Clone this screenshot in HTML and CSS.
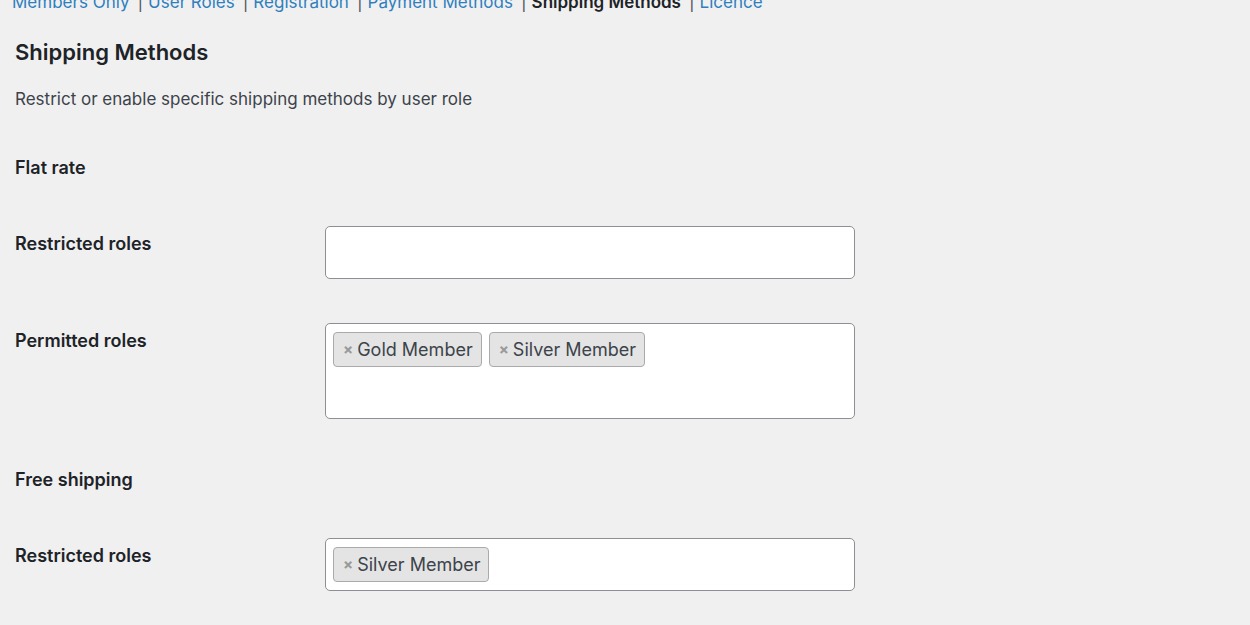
FILE: index.html
```html
<!DOCTYPE html>
<html>
  <head>
    <title>Shipping Methods</title>
    <meta name="viewport" content="width=device-width, initial-scale=1.0" />
    <link rel="stylesheet" href="styles.css">
  </head>
  <body>
    <div class="wrap">
      <ul class="subsubsub">
        <li><a href="#">Members Only</a><span class="sep">|</span></li>
        <li><a href="#">User Roles</a><span class="sep">|</span></li>
        <li><a href="#">Registration</a><span class="sep">|</span></li>
        <li><a href="#">Payment Methods</a><span class="sep">|</span></li>
        <li><a href="#" class="current">Shipping Methods</a><span class="sep">|</span></li>
        <li><a href="#">Licence</a></li>
      </ul>

      <h2 class="title">Shipping Methods</h2>
      <p class="desc">Restrict or enable specific shipping methods by user role</p>

      <h3 class="method">Flat rate</h3>
      <div class="row">
        <div class="label">Restricted roles</div>
        <div class="field">
          <div class="select"></div>
        </div>
      </div>
      <div class="row">
        <div class="label">Permitted roles</div>
        <div class="field">
          <div class="select tall">
            <span class="chip"><span class="x">×</span>Gold Member</span>
            <span class="chip"><span class="x">×</span>Silver Member</span>
          </div>
        </div>
      </div>

      <h3 class="method">Free shipping</h3>
      <div class="row">
        <div class="label">Restricted roles</div>
        <div class="field">
          <div class="select">
            <span class="chip"><span class="x">×</span>Silver Member</span>
          </div>
        </div>
      </div>
    </div>
  </body>
</html>
```

FILE: styles.css
```css
body {
  margin: 0;
  background-color: #f0f0f1;
  font-family: Inter, "Noto Sans", sans-serif;
  color: #1d2327;
  overflow: hidden;
}
.wrap {
  padding: 0 15px;
}
.subsubsub {
  list-style: none;
  margin: -8px 0 0 -3px;
  padding: 0;
  display: flex;
  font-size: 17px;
  line-height: 20px;
}
.subsubsub a {
  color: #2f7fbd;
  text-decoration: none;
}
.subsubsub a.current {
  color: #1d2327;
  font-weight: 600;
}
.sep {
  color: #50575e;
  padding: 0 5px 0 8px;
}
.title {
  font-size: 22px;
  font-weight: 600;
  line-height: 28px;
  margin: 26px 0 0;
}
.desc {
  font-size: 17px;
  line-height: 22px;
  color: #3c434a;
  margin: 22px 0 0;
}
.method {
  font-size: 18px;
  font-weight: 600;
  line-height: 22px;
  margin: 47px 0 0;
}
.row + .method {
  margin-top: 28px;
}
.row {
  display: flex;
  padding: 22px 0;
}
.method + .row {
  padding-top: 47px;
}
.label {
  width: 310px;
  flex-shrink: 0;
  font-size: 18px;
  font-weight: 600;
  line-height: 22px;
  padding-top: 7px;
}
.field {
  width: 530px;
}
.select {
  box-sizing: border-box;
  height: 53px;
  background-color: #fff;
  border: 1px solid #8c8f94;
  border-radius: 5px;
  padding: 8px 7px;
  display: flex;
  align-items: flex-start;
  gap: 7px;
}
.select.tall {
  height: 96px;
}
.chip {
  box-sizing: border-box;
  height: 35px;
  display: inline-flex;
  align-items: center;
  padding: 0 8px 0 9px;
  background-color: #e4e4e4;
  border: 1px solid #aaa;
  border-radius: 4px;
  font-size: 18px;
  color: #3c434a;
}
.x {
  color: #999;
  font-size: 15px;
  font-weight: 700;
  margin-right: 4px;
}
```
